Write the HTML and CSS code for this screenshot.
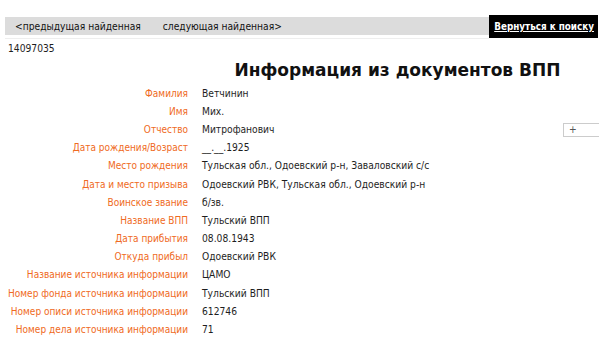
FILE: index.html
```html
<!DOCTYPE html>
<html lang="ru">
  <head>
    <meta charset="UTF-8" />
    <title>Информация из документов ВПП</title>
    <link rel="stylesheet" href="styles.css">
  </head>
  <body>
    <div class="topbar">
      <div class="nav">
        <a href="#" class="nav-link">&lt;предыдущая найденная</a>
        <a href="#" class="nav-link">следующая найденная&gt;</a>
      </div>
      <a href="#" class="back">Вернуться к поиску</a>
    </div>
    <div class="record-id">14097035</div>
    <h1 class="title">Информация из документов ВПП</h1>

    <div class="card">
      <div class="label">Фамилия</div><div class="value">Ветчинин</div>
      <div class="label">Имя</div><div class="value">Мих.</div>
      <div class="label">Отчество</div><div class="value">Митрофанович</div>
      <div class="label">Дата рождения/Возраст</div><div class="value">__.__.1925</div>
      <div class="label">Место рождения</div><div class="value">Тульская обл., Одоевский р-н, Заваловский с/с</div>
      <div class="label">Дата и место призыва</div><div class="value">Одоевский РВК, Тульская обл., Одоевский р-н</div>
      <div class="label">Воинское звание</div><div class="value">б/зв.</div>
      <div class="label">Название ВПП</div><div class="value">Тульский ВПП</div>
      <div class="label">Дата прибытия</div><div class="value">08.08.1943</div>
      <div class="label">Откуда прибыл</div><div class="value">Одоевский РВК</div>
      <div class="label">Название источника информации</div><div class="value">ЦАМО</div>
      <div class="label">Номер фонда источника информации</div><div class="value">Тульский ВПП</div>
      <div class="label">Номер описи источника информации</div><div class="value">612746</div>
      <div class="label">Номер дела источника информации</div><div class="value">71</div>
    </div>

    <div class="expand">+</div>
  </body>
</html>
```

FILE: styles.css
```css
body {
  margin: 0;
  font-family: "DejaVu Sans Condensed", "DejaVu Sans", sans-serif;
  font-stretch: condensed;
  font-size: 10.2px;
  color: #1e1e1e;
  background: #fff;
}
.topbar {
  display: flex;
  align-items: flex-start;
  margin-top: 15px;
  padding-left: 5px;
  padding-right: 1px;
}
.nav {
  flex: 1;
  display: flex;
  gap: 22px;
  height: 18px;
  margin-top: 2px;
  align-items: center;
  padding-left: 10px;
  background: #dcdcdc;
  box-shadow: 0 3px 0 #fff, 0 4px 0 #eeeeee;
}
.nav-link {
  color: #111;
  text-decoration: none;
}
.back {
  background: #000;
  color: #fff;
  height: 23px;
  line-height: 23px;
  padding: 0 4px 0 5px;
  font-size: 9.8px;
  font-weight: bold;
}
.record-id {
  margin: 5px 8px 0;
}
.title {
  margin: 6px 0 4px 196px;
  text-align: center;
  font-family: "DejaVu Sans", sans-serif;
  font-stretch: normal;
  font-size: 17px;
  font-weight: bold;
  color: #111;
}
.card {
  display: grid;
  grid-template-columns: 188px 1fr;
  column-gap: 14px;
  grid-auto-rows: 18.2px;
  align-items: center;
}
.label {
  text-align: right;
  color: #ef6a23;
  font-size: 10px;
}
.expand {
  position: absolute;
  left: 563px;
  top: 123px;
  width: 40px;
  height: 14px;
  border: 1px solid #ccc;
  box-sizing: border-box;
  padding-left: 5px;
  line-height: 12px;
  color: #555;
}
```
